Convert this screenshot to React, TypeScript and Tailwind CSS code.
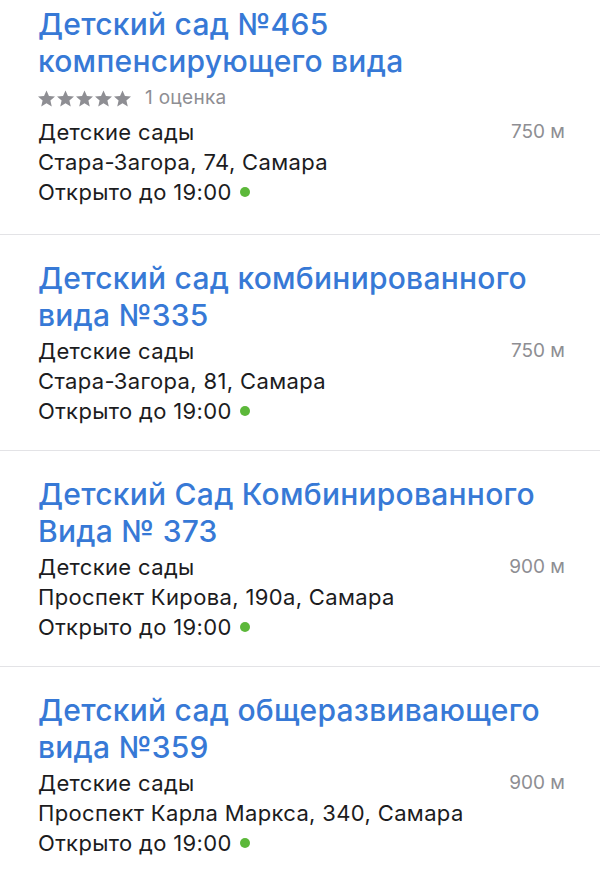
import { Fragment } from "react"

const PLACES = [
  {
    title: ["Детский сад №465", "компенсирующего вида"],
    rating: "1 оценка",
    category: "Детские сады",
    distance: "750 м",
    address: "Стара-Загора, 74, Самара",
    hours: "Открыто до 19:00",
  },
  {
    title: ["Детский сад комбинированного", "вида №335"],
    category: "Детские сады",
    distance: "750 м",
    address: "Стара-Загора, 81, Самара",
    hours: "Открыто до 19:00",
  },
  {
    title: ["Детский Сад Комбинированного", "Вида № 373"],
    category: "Детские сады",
    distance: "900 м",
    address: "Проспект Кирова, 190а, Самара",
    hours: "Открыто до 19:00",
  },
  {
    title: ["Детский сад общеразвивающего", "вида №359"],
    category: "Детские сады",
    distance: "900 м",
    address: "Проспект Карла Маркса, 340, Самара",
    hours: "Открыто до 19:00",
  },
]

function Stars() {
  return (
    <div className="flex gap-[2px]">
      {[0, 1, 2, 3, 4].map((i) => (
        <svg key={i} width="17" height="17" viewBox="2 2.2 20 19" className="fill-[#8e8e93]">
          <path d="M12 2.2l2.9 6.6 7.1.6-5.4 4.7 1.6 7-6.2-3.7-6.2 3.7 1.6-7L2 9.4l7.1-.6z" />
        </svg>
      ))}
    </div>
  )
}

export default function App() {
  return (
    <div className="w-[600px] h-[878px] overflow-hidden bg-white font-['Inter',sans-serif]">
      {PLACES.map((place, index) => (
        <Fragment key={index}>
          {index > 0 && <div className="h-px bg-[#e3e3e6]" />}
          <div className={`pl-[38px] pr-[35px] ${index === 0 ? "pt-[6px] pb-[27px]" : "pt-[25px] pb-[24px]"}`}>
            <div className="text-[30px] leading-[37px] font-medium text-[#3779d6] tracking-[0.25px]">
              {place.title.map((line) => (
                <div key={line}>{line}</div>
              ))}
            </div>
            {place.rating && (
              <div className="flex items-center gap-[14px] h-[34px] mt-[1px]">
                <Stars />
                <span className="text-[19px] text-[#8e8e93] tracking-[0.3px]">{place.rating}</span>
              </div>
            )}
            <div className="mt-[2px] text-[22px] leading-[30px] text-[#1c1c1e] tracking-[0.35px]">
              <div className="flex justify-between items-center">
                <span>{place.category}</span>
                <span className="text-[19px] text-[#8e8e93] tracking-normal">{place.distance}</span>
              </div>
              <div>{place.address}</div>
              <div className="flex items-center gap-[8px]">
                <span>{place.hours}</span>
                <span className="w-[10px] h-[10px] rounded-full bg-[#5cb83a]" />
              </div>
            </div>
          </div>
        </Fragment>
      ))}
    </div>
  )
}
